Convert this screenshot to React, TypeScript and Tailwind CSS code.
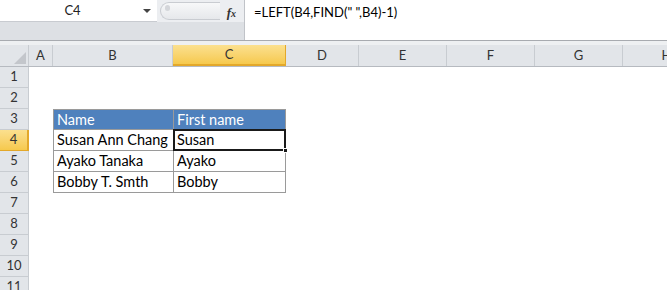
import React from "react";

const cols = [
  { l: "A", w: 24 },
  { l: "B", w: 120 },
  { l: "C", w: 113 },
  { l: "D", w: 73 },
  { l: "E", w: 88 },
  { l: "F", w: 88 },
  { l: "G", w: 88 },
  { l: "H", w: 88 },
];

const rows = [1, 2, 3, 4, 5, 6, 7, 8, 9, 10, 11];

function Cell({ r, c }: { r: number; c: string }) {
  if (r === 3 && c === "B")
    return <div className="h-full border border-[#9a9a9a] border-r-0 bg-[#4f81bd] pl-[3px] text-white leading-[20px]">Name</div>;
  if (r === 3 && c === "C")
    return <div className="h-full border border-[#9a9a9a] bg-[#4f81bd] pl-[3px] text-white leading-[20px]">First name</div>;
  const data: Record<number, [string, string]> = {
    4: ["Susan Ann Chang", "Susan"],
    5: ["Ayako Tanaka", "Ayako"],
    6: ["Bobby T. Smth", "Bobby"],
  };
  if (data[r] && c === "B")
    return <div className="h-full border-b border-l border-[#9a9a9a] pl-[3px] leading-[20px] text-black">{data[r][0]}</div>;
  if (data[r] && c === "C") {
    if (r === 4)
      return (
        <div className="relative h-full border-b border-l border-r border-[#9a9a9a]">
          <div className="absolute left-[-1px] top-[-1px] right-[-1px] bottom-[-1px] border-2 border-[#1a1a1a] pl-[2px] leading-[18px] text-black">Susan</div>
          <div className="absolute right-[-3px] bottom-[-3px] h-[5px] w-[5px] border border-white bg-[#1a1a1a]" />
        </div>
      );
    return <div className="h-full border-b border-l border-r border-[#9a9a9a] pl-[3px] leading-[20px] text-black">{data[r][1]}</div>;
  }
  return <div className="h-full" />;
}

export default function App() {
  return (
    <div className="h-[290px] w-[667px] overflow-hidden bg-white" style={{ fontFamily: "Lato, 'Open Sans', sans-serif" }}>
      {/* formula bar */}
      <div className="flex h-[41px] border-b border-[#a8abb0]">
        <div className="flex w-[244px] flex-col bg-[#dfe2e6]">
          <div className="flex h-[22px] items-stretch">
            <div className="flex w-[157px] items-center border-b border-[#c8cbd0] bg-white">
              <div className="flex-1 pl-[6px] text-center text-[13px] text-[#222]">C4</div>
              <svg width="16" height="8" viewBox="0 0 16 8" className="mr-[2px]">
                <path d="M4 2 L12 2 L8 6 Z" fill="#444" />
              </svg>
            </div>
            <div className="relative flex flex-1 items-center bg-[#eceef1]">
              <div className="absolute left-[3px] top-[2px] h-[18px] w-[60px] rounded-l-full border border-r-0 border-[#c9ccd1] bg-gradient-to-b from-[#f7f8f9] to-[#e6e8eb]" />
              <div className="absolute left-[8px] top-[5px] h-[6px] w-[5px] rounded-full bg-[#d4d6da]" />
              <span className="absolute right-[8px] top-[3px] text-[13px] italic font-bold text-[#333]" style={{ fontFamily: "'Liberation Serif', serif" }}>
                f<span className="text-[10px]">x</span>
              </span>
            </div>
          </div>
          <div className="flex-1 bg-[#dde0e4]" />
        </div>
        <div className="flex-1 border-l border-[#c0c3c8] bg-white pl-[9px] pt-[3px] text-[13px] text-black">=LEFT(B4,FIND(" ",B4)-1)</div>
      </div>
      <div className="h-[4px] bg-[#eef0f2]" />
      {/* column headers */}
      <div className="flex h-[22px] border-b border-[#b6bac0] bg-[#e2e5e9] text-[13px] text-[#333]">
        <div className="relative w-[29px] shrink-0 border-r border-[#c8ccd1]">
          <svg width="12" height="12" className="absolute right-[2px] bottom-[2px]" viewBox="0 0 12 12">
            <path d="M12 0 L12 12 L0 12 Z" fill="#c3c6cb" />
          </svg>
        </div>
        {cols.map((c) => (
          <div
            key={c.l}
            style={{ width: c.w }}
            className={
              c.l === "C"
                ? "flex shrink-0 items-center justify-center border-b-2 border-r border-[#e3a82a] bg-gradient-to-b from-[#fbe08e] to-[#f6c94c] text-[#333]"
                : "flex shrink-0 items-center justify-center border-r border-[#c8ccd1]"
            }
          >
            {c.l}
          </div>
        ))}
      </div>
      {/* rows */}
      {rows.map((r) => (
        <div key={r} className="flex h-[21px] text-[14.5px]">
          <div
            className={
              r === 4
                ? "flex w-[29px] shrink-0 items-center justify-center border-b border-r-2 border-[#e3a82a] bg-gradient-to-b from-[#fbe08e] to-[#f6c94c] text-[13px] text-[#333]"
                : "flex w-[29px] shrink-0 items-center justify-center border-b border-r border-[#c8ccd1] bg-[#e2e5e9] text-[13px] text-[#333]"
            }
          >
            {r}
          </div>
          {cols.map((c) => (
            <div key={c.l} style={{ width: c.w }} className="shrink-0">
              <Cell r={r} c={c.l} />
            </div>
          ))}
        </div>
      ))}
    </div>
  );
}
